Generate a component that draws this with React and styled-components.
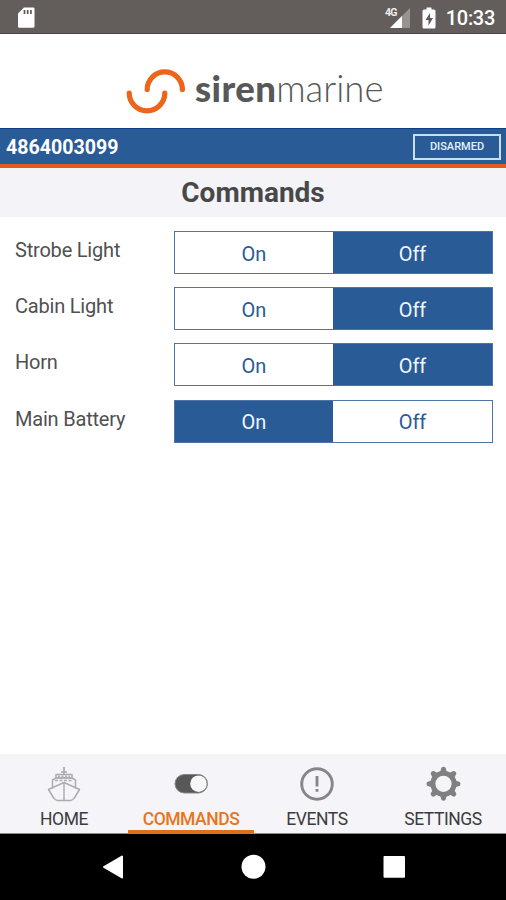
import React, { useState } from "react";
import styled, { createGlobalStyle } from "styled-components";

const GlobalStyle = createGlobalStyle`
  *, *::before, *::after { box-sizing: border-box; }
  body { margin: 0; background: #fff; }
`;

const Screen = styled.div`
  display: flex;
  flex-direction: column;
  width: 506px;
  height: 900px;
  overflow: hidden;
  background: #fff;
  color: #4a4a4a;
  font-family: Roboto, "Liberation Sans", sans-serif;
`;

const Icon = styled.svg`
  display: block;
  flex: none;
`;

const StatusBar = styled.header`
  display: flex;
  flex: none;
  align-items: center;
  justify-content: space-between;
  height: 34px;
  padding: 2px 11px 0 17px;
  background: #635d5b;
  border-bottom: 1px solid #474342;
`;

const StatusGroup = styled.div`
  display: flex;
  align-items: center;
`;

const BatterySlot = styled.div`
  margin-left: 11px;
`;

const Clock = styled.span`
  margin-left: 10px;
  padding-top: 1px;
  color: #fff;
  font-size: 20px;
  font-weight: 500;
  line-height: 24px;
  letter-spacing: -0.3px;
`;

const Brand = styled.div`
  display: flex;
  flex: none;
  height: 94px;
  padding: 34px 0 0 126px;
`;

const Wordmark = styled.div`
  display: flex;
  margin: -2px 0 0 9px;
  color: #57585a;
  font-family: Lato, sans-serif;
  font-size: 36.5px;
  line-height: 44px;
`;

const WordHeavy = styled.span`
  font-weight: 900;
  letter-spacing: 0.4px;
`;

const WordLight = styled.span`
  font-weight: 300;
  letter-spacing: 0;
`;

const DeviceBar = styled.div`
  display: flex;
  flex: none;
  align-items: center;
  justify-content: space-between;
  height: 40px;
  padding: 1px 5px 0 6px;
  background: #295b96;
  border-top: 1px solid #0c3f87;
  border-bottom: 4px solid #e35a1c;
`;

const DeviceId = styled.span`
  padding-top: 1px;
  color: #fff;
  font-size: 19.6px;
  font-weight: 700;
  line-height: 24px;
`;

const StateBadge = styled.span`
  width: 88px;
  height: 26px;
  margin-top: -1px;
  border: 2px solid #c9def5;
  color: #e6f0fb;
  font-size: 11px;
  font-weight: 500;
  line-height: 22px;
  text-align: center;
`;

const Title = styled.h1`
  flex: none;
  height: 49px;
  margin: 0;
  background: #f3f3f8;
  color: #484848;
  font-size: 28px;
  font-weight: 700;
  line-height: 50px;
  text-align: center;
`;

const CommandList = styled.main`
  display: flex;
  flex: 1;
  flex-direction: column;
  gap: 13.2px;
  padding: 14px 13px 0 15px;
`;

const CommandRow = styled.div`
  display: flex;
  justify-content: space-between;
  height: 43px;
`;

const CommandLabel = styled.span`
  color: #505050;
  font-size: 20px;
  line-height: 38px;
  letter-spacing: -0.2px;
`;

const Switch = styled.div`
  display: grid;
  grid-template-columns: 158px 159px;
  width: 319px;
  border: 1px solid #4e74a8;
`;

const Option = styled.button`
  margin: 0;
  padding: 2px 0 0;
  border: 0;
  background: ${(p) => (p.$active ? "#295b96" : "#fff")};
  color: ${(p) => (p.$active ? "#f1f6fc" : "#295b96")};
  font: 20px/38px Roboto, sans-serif;
`;

const TabBar = styled.nav`
  display: grid;
  flex: none;
  grid-template-columns: 128px 126px 126px 126px;
  height: 80px;
  background: #f4f4f9;
  border-bottom: 1px solid #8a8a8c;
`;

const Tab = styled.div`
  display: flex;
  flex-direction: column;
  align-items: center;
  margin-bottom: -1px;
  padding-top: 12px;
  border-bottom: ${(p) => (p.$active ? "4px solid #dd7019" : "0")};
  color: ${(p) => (p.$active ? "#e8741c" : "#3c3c3c")};
  font-size: 17.5px;
  font-weight: ${(p) => (p.$active ? 500 : 400)};
  line-height: 22px;
  letter-spacing: -0.45px;
`;

const TabText = styled.span`
  margin-top: 6px;
`;

const SystemBar = styled.footer`
  display: flex;
  flex: none;
  justify-content: space-between;
  height: 66px;
  padding: 20px 98px 0 99px;
  background: #000;
`;

const SdCard = () => (
  <Icon width="19" height="22" viewBox="0 0 19 22">
    <path d="M7 .5h9.200q1.300 0 1.300 1.300V19.300q0 1.500-1.500 1.500H2.500Q1 20.800 1 19.300V6.500Z" fill="#fff" />
    <path d="M7.500 3v4M10.700 3v4M13.900 3v4" stroke="#5d5957" strokeWidth="1.700" />
  </Icon>
);

const Signal = () => (
  <Icon width="26" height="24" viewBox="0 0 26 24">
    <path d="M25 2V22H5Z" fill="#989391" />
    <path d="M17 10V22H5Z" fill="#fff" />
    <text x="0" y="10" fill="#f0eeee" fontFamily="Roboto, sans-serif" fontSize="10.500" fontWeight="700" textLength="12.500">4G</text>
  </Icon>
);

const Battery = () => (
  <Icon width="14" height="22" viewBox="0 0 14 22">
    <path d="M4.500 .5h5v2H12q1.500 0 1.500 1.500V20q0 1.500-1.500 1.500H2Q.5 21.500 .5 20V4Q.5 2.500 2 2.500h2.500Z" fill="#fff" />
    <path d="M8 6 3.500 13H6.500V18.500L11 11H8Z" fill="#5d5957" />
  </Icon>
);

const LogoMark = () => (
  <Icon width="60" height="46" viewBox="0 0 60 46" fill="none" stroke="#ed651b" strokeWidth="5.200" strokeLinecap="round">
    <path d="M3.200 25a17.800 17.800 0 0 0 35.600 0" />
    <path d="M21.200 21.500a17.600 17.600 0 0 1 35.200 0" />
  </Icon>
);

const Ship = () => (
  <Icon width="34" height="36" viewBox="0 0 34 36" fill="none" stroke="#adadb0" strokeWidth="1.500" strokeLinejoin="round">
    <path d="M17 1V8" strokeWidth="1.800" />
    <path d="M14 6h6M9 8.500h16v3.500H9Z" />
    <path d="M11 10.500h12" strokeDasharray="2 1.500" strokeWidth="2" />
    <path d="M5.500 22.500V14l3.500-2h16l3.500 2v8.500" />
    <path d="M8 14.500h18" strokeDasharray="3 1.500" />
    <path d="M17 16.500 1.500 23.500 7 32.500 10 34.500h14l3-2 5.500-9Z" />
    <path d="M17 17v17" />
  </Icon>
);

const ToggleIcon = () => (
  <Icon width="35" height="36" viewBox="0 0 35 36">
    <rect x="1" y="8.500" width="32.500" height="18.500" rx="9.250" fill="#585858" stroke="#858585" />
    <circle cx="24.500" cy="17.700" r="8.300" fill="#f7f7fa" />
  </Icon>
);

const Alert = () => (
  <Icon width="34" height="36" viewBox="0 0 34 36" fill="none" stroke="#868688">
    <circle cx="17" cy="18" r="15.300" strokeWidth="2.900" />
    <path d="M17 10v10.500M17 23v2.700" strokeWidth="2.800" />
  </Icon>
);

const Gear = () => (
  <Icon width="35" height="36" viewBox="0 0 35 36" fill="none" stroke="#808082">
    <circle cx="17.500" cy="17.800" r="10.600" strokeWidth="5" />
    {[0, 45, 90, 135, 180, 225, 270, 315].map((angle) => (
      <path
        key={angle}
        d="M12.500 7 14.600 4.800 15.100 2.600q.3-1.800 2.400-1.800t2.400 1.800L20.400 4.800 22.500 7Z"
        fill="#808082"
        stroke="none"
        transform={`rotate(${angle} 17.500 17.800)`}
      />
    ))}
  </Icon>
);

const initialCommands = [
  { name: "Strobe Light", on: false },
  { name: "Cabin Light", on: false },
  { name: "Horn", on: false },
  { name: "Main Battery", on: true },
];

const tabs = [
  { name: "HOME", Glyph: Ship },
  { name: "COMMANDS", Glyph: ToggleIcon, active: true },
  { name: "EVENTS", Glyph: Alert },
  { name: "SETTINGS", Glyph: Gear },
];

export default function App() {
  const [commands, setCommands] = useState(initialCommands);
  const change = (name, on) =>
    setCommands((list) => list.map((c) => (c.name === name ? { ...c, on } : c)));

  return (
    <Screen>
      <GlobalStyle />
      <StatusBar>
        <SdCard />
        <StatusGroup>
          <Signal />
          <BatterySlot>
            <Battery />
          </BatterySlot>
          <Clock>10:33</Clock>
        </StatusGroup>
      </StatusBar>
      <Brand>
        <LogoMark />
        <Wordmark>
          <WordHeavy>siren</WordHeavy>
          <WordLight>marine</WordLight>
        </Wordmark>
      </Brand>
      <DeviceBar>
        <DeviceId>4864003099</DeviceId>
        <StateBadge>DISARMED</StateBadge>
      </DeviceBar>
      <Title>Commands</Title>
      <CommandList>
        {commands.map(({ name, on }) => (
          <CommandRow key={name}>
            <CommandLabel>{name}</CommandLabel>
            <Switch>
              <Option $active={on} onClick={() => change(name, true)}>On</Option>
              <Option $active={!on} onClick={() => change(name, false)}>Off</Option>
            </Switch>
          </CommandRow>
        ))}
      </CommandList>
      <TabBar>
        {tabs.map(({ name, Glyph, active }) => (
          <Tab key={name} $active={active}>
            <Glyph />
            <TabText>{name}</TabText>
          </Tab>
        ))}
      </TabBar>
      <SystemBar>
        <Icon width="28" height="28" viewBox="0 0 28 28">
          <path d="M23 2.500V23.500L5 13Z" fill="#fff" stroke="#fff" strokeWidth="2" strokeLinejoin="round" />
        </Icon>
        <Icon width="28" height="28" viewBox="0 0 28 28">
          <circle cx="13.500" cy="12.800" r="12" fill="#fff" />
        </Icon>
        <Icon width="28" height="28" viewBox="0 0 28 28">
          <rect x="3.500" y="2" width="21.500" height="21.800" rx="1" fill="#fff" />
        </Icon>
      </SystemBar>
    </Screen>
  );
}
